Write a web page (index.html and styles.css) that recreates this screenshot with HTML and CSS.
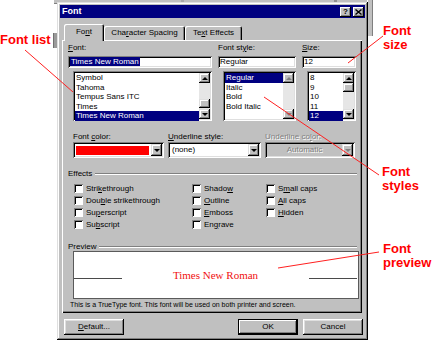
FILE: index.html
```html
<!DOCTYPE html>
<html>
<head>
<meta charset="utf-8">
<link rel="stylesheet" href="styles.css">
</head>
<body>
<div class="page">
  <div class="bg-win bg-top"></div>
  <div class="bg-win bg-right"></div>
  <div class="bg-win bg-left"></div>
  <div class="dialog">
    <div class="titlebar">
      <span class="title">Font</span>
      <div class="tb-btns">
        <span class="tb-btn help">?</span>
        <span class="tb-btn close"><svg width="7" height="6" viewBox="0 0 7 6"><path d="M0.5 0.5 L6.5 5.5 M6.5 0.5 L0.5 5.5" stroke="#000" stroke-width="1.4"/></svg></span>
      </div>
    </div>
    <div class="tabs">
      <div class="tab active t-font">Fo<u>n</u>t</div>
      <div class="tab t-char">Cha<u>r</u>acter Spacing</div>
      <div class="tab t-fx">Te<u>x</u>t Effects</div>
    </div>
    <div class="panel">
      <div class="row1">
        <div class="col">
          <div class="lbl"><u>F</u>ont:</div>
          <div class="field"><span class="sel">Times New Roman</span></div>
          <div class="list">
            <div class="items">
              <div class="item">Symbol</div>
              <div class="item">Tahoma</div>
              <div class="item">Tempus Sans ITC</div>
              <div class="item">Times</div>
              <div class="item selected">Times New Roman</div>
            </div>
            <div class="sbar">
              <div class="sbtn"><span class="arr up"></span></div>
              <div class="track"><div class="thumb thumb-font"></div></div>
              <div class="sbtn"><span class="arr down"></span></div>
            </div>
          </div>
        </div>
        <div class="col">
          <div class="lbl">Font st<u>y</u>le:</div>
          <div class="field">Regular</div>
          <div class="list">
            <div class="items">
              <div class="item selected">Regular</div>
              <div class="item">Italic</div>
              <div class="item">Bold</div>
              <div class="item">Bold Italic</div>
            </div>
            <div class="sbar">
              <div class="sbtn"><span class="arr up dis"></span></div>
              <div class="track"></div>
              <div class="sbtn"><span class="arr down dis"></span></div>
            </div>
          </div>
        </div>
        <div class="col">
          <div class="lbl"><u>S</u>ize:</div>
          <div class="field">12</div>
          <div class="list">
            <div class="items">
              <div class="item">8</div>
              <div class="item">9</div>
              <div class="item">10</div>
              <div class="item">11</div>
              <div class="item selected">12</div>
            </div>
            <div class="sbar">
              <div class="sbtn"><span class="arr up"></span></div>
              <div class="track"><div class="thumb thumb-size"></div></div>
              <div class="sbtn"><span class="arr down"></span></div>
            </div>
          </div>
        </div>
      </div>

      <div class="row2">
        <div class="col">
          <div class="lbl">Font <u>c</u>olor:</div>
          <div class="combo">
            <div class="swatch"></div>
            <div class="cbtn"><span class="arr down"></span></div>
          </div>
        </div>
        <div class="col">
          <div class="lbl"><u>U</u>nderline style:</div>
          <div class="combo">
            <div class="ctext">(none)</div>
            <div class="cbtn"><span class="arr down"></span></div>
          </div>
        </div>
        <div class="col">
          <div class="lbl disabled">Underline co<u>l</u>or:</div>
          <div class="combo off">
            <div class="ctext center disabled">Automatic</div>
            <div class="cbtn"><span class="arr down dis"></span></div>
          </div>
        </div>
      </div>

      <div class="group effects">
        <div class="ghead"><span>Effects</span><div class="groove"></div></div>
        <div class="checks">
          <div class="chk"><span class="box"></span><span>Stri<u>k</u>ethrough</span></div>
          <div class="chk"><span class="box"></span><span>Dou<u>b</u>le strikethrough</span></div>
          <div class="chk"><span class="box"></span><span>Su<u>p</u>erscript</span></div>
          <div class="chk"><span class="box"></span><span>Su<u>b</u>script</span></div>
          <div class="chk"><span class="box"></span><span>Shado<u>w</u></span></div>
          <div class="chk"><span class="box"></span><span><u>O</u>utline</span></div>
          <div class="chk"><span class="box"></span><span><u>E</u>mboss</span></div>
          <div class="chk"><span class="box"></span><span>En<u>g</u>rave</span></div>
          <div class="chk"><span class="box"></span><span>S<u>m</u>all caps</span></div>
          <div class="chk"><span class="box"></span><span><u>A</u>ll caps</span></div>
          <div class="chk"><span class="box"></span><span><u>H</u>idden</span></div>
        </div>
      </div>

      <div class="group preview">
        <div class="ghead"><span>Preview</span><div class="groove"></div></div>
        <div class="pbox">
          <div class="pline"></div>
          <div class="ptext">Times New Roman</div>
          <div class="pline"></div>
        </div>
      </div>
      <div class="note">This is a TrueType font. This font will be used on both printer and screen.</div>
    </div>
    <div class="buttons">
      <div class="btn default-btn"><u>D</u>efault...</div>
      <div class="spacer"></div>
      <div class="btn ok">OK</div>
      <div class="btn cancel">Cancel</div>
    </div>
  </div>

  <div class="callout c-list">Font list</div>
  <div class="callout c-size">Font<br>size</div>
  <div class="callout c-styles">Font<br>styles</div>
  <div class="callout c-preview">Font<br>preview</div>

  <svg class="leaders" width="432" height="343" viewBox="0 0 432 343">
    <line x1="25" y1="50" x2="73" y2="92"/>
    <line x1="348" y1="63" x2="383" y2="36"/>
    <line x1="264" y1="97" x2="379" y2="175"/>
    <line x1="278" y1="268" x2="379" y2="252"/>
  </svg>
</div>
</body>
</html>
```

FILE: styles.css
```css
* { box-sizing: border-box; margin: 0; padding: 0; }
html, body { background: #fff; }
body {
  width: 432px;
  height: 343px;
  overflow: hidden;
  font-family: "Liberation Sans", Arial, sans-serif;
  font-size: 8px;
  color: #000;
}
u { text-decoration: underline; text-underline-offset: 1px; }

.page {
  position: relative;
  width: 432px;
  height: 343px;
  padding: 2px 0 0 57px;
}

/* ---------- partly hidden windows behind the dialog ---------- */
.bg-win {
  position: absolute;
  background: #c0c0c0;
}
.bg-top {
  left: 54px;
  top: 0;
  width: 318px;
  height: 4px;
  border-bottom: 1px solid #808080;
  background: linear-gradient(90deg, #c0c0c0 0 40%, #a8a8a8 40% 41%, #c0c0c0 41% 88%, #909090 88% 89%, #c0c0c0 89%);
}
.bg-right {
  left: 367px;
  top: 0;
  width: 6px;
  height: 36px;
  border-right: 1px solid #808080;
  box-shadow: inset 1px 0 #fff;
}
.bg-left {
  left: 53px;
  top: 33px;
  width: 5px;
  height: 15px;
  background: #9a9a9a;
  border-left: 1px solid #707070;
}

/* ---------- dialog window ---------- */
.dialog {
  position: relative;
  z-index: 1;
  width: 311px;
  height: 338px;
  background: #c0c0c0;
  padding: 3px;
  display: flex;
  flex-direction: column;
  box-shadow: inset -1px -1px #000, inset 1px 1px #dfdfdf,
              inset -2px -2px #808080, inset 2px 2px #fff;
}

.titlebar {
  height: 13px;
  background: #000080;
  display: flex;
  align-items: center;
  justify-content: space-between;
  padding: 0 1px 0 2px;
}
.title {
  color: #fff;
  font-weight: bold;
  font-size: 9px;
  line-height: 13px;
}
.tb-btns { display: flex; gap: 2px; }
.tb-btn {
  width: 11px;
  height: 10px;
  background: #c0c0c0;
  display: flex;
  align-items: center;
  justify-content: center;
  font-weight: bold;
  font-size: 8px;
  line-height: 10px;
  box-shadow: inset -1px -1px #000, inset 1px 1px #fff, inset -2px -2px #808080;
}
.tb-btn svg { display: block; }

/* ---------- tabs ---------- */
.tabs {
  height: 16px;
  margin-top: 6px;
  padding-left: 4px;
  display: flex;
  align-items: flex-end;
  position: relative;
  z-index: 2;
}
.tab {
  height: 14px;
  line-height: 13px;
  text-align: center;
  background: #c0c0c0;
  border-radius: 2px 2px 0 0;
  box-shadow: inset 1px 1px #fff, inset -1px 0 #000, inset -2px 0 #808080;
}
.tab.active {
  height: 17px;
  margin-bottom: -1px;
  line-height: 15px;
}
.t-font { width: 40px; }
.t-char { width: 81px; }
.t-fx { width: 57px; }

/* ---------- panel ---------- */
.panel {
  height: 273px;
  margin: 0 3px 0 2px;
  padding: 3px 6px 3px 6px;
  background: #c0c0c0;
  box-shadow: inset 1px 1px #fff, inset -1px -1px #000, inset -2px -2px #808080;
}
.lbl { line-height: 10px; height: 10px; white-space: nowrap; }
.disabled { color: #808080; text-shadow: 1px 1px #fff; }

.row1 {
  display: grid;
  grid-template-columns: 144px 78px 54px;
  column-gap: 6px;
}
.col { display: flex; flex-direction: column; }

.field {
  margin-top: 3px;
  height: 12px;
  line-height: 12px;
  padding-left: 2px;
  background: #fff;
  white-space: nowrap;
  box-shadow: inset 1px 1px #808080, inset -1px -1px #fff, inset 2px 2px #000, inset -2px -2px #dfdfdf;
}
.sel { background: #000080; color: #fff; padding: 0 1px; }

.list {
  margin-top: 3px;
  margin-left: 5px;
  height: 50px;
  padding: 2px;
  background: #fff;
  display: flex;
  box-shadow: inset 1px 1px #808080, inset -1px -1px #fff, inset 2px 2px #000, inset -2px -2px #dfdfdf;
}
.items { flex: 1; min-width: 0; }
.item {
  height: 9.6px;
  line-height: 9.6px;
  padding-left: 1px;
  white-space: nowrap;
}
.item.selected { background: #000080; color: #fff; }

.sbar {
  width: 11px;
  display: flex;
  flex-direction: column;
}
.sbtn {
  height: 10px;
  background: #c0c0c0;
  display: flex;
  align-items: center;
  justify-content: center;
  box-shadow: inset -1px -1px #000, inset 1px 1px #dfdfdf, inset -2px -2px #808080, inset 2px 2px #fff;
}
.track {
  flex: 1;
  background: #e6e6e6;
  display: flex;
  flex-direction: column;
}
.thumb {
  height: 9px;
  background: #c0c0c0;
  box-shadow: inset -1px -1px #000, inset 1px 1px #dfdfdf, inset -2px -2px #808080, inset 2px 2px #fff;
}
.thumb-font { margin-top: auto; margin-bottom: 1px; }
.thumb-size { margin-top: 0; }

.arr { width: 0; height: 0; display: block; }
.arr.up { border-left: 3px solid transparent; border-right: 3px solid transparent; border-bottom: 3px solid #000; }
.arr.down { border-left: 3px solid transparent; border-right: 3px solid transparent; border-top: 3px solid #000; }
.arr.up.dis { border-bottom-color: #808080; }
.arr.down.dis { border-top-color: #808080; }

/* ---------- row 2 ---------- */
.row2 {
  margin-top: 11px;
  margin-left: 5px;
  display: grid;
  grid-template-columns: 91px 93px 90px;
  column-gap: 4px;
}
.combo {
  height: 16px;
  padding: 2px;
  background: #fff;
  display: flex;
  box-shadow: inset 1px 1px #808080, inset -1px -1px #fff, inset 2px 2px #000, inset -2px -2px #dfdfdf;
}
.combo.off { background: #c0c0c0; }
.swatch { flex: 1; margin: 2px 2px 1px 1px; background: #ff0000; }
.ctext { flex: 1; line-height: 12px; padding-left: 2px; white-space: nowrap; }
.ctext.center { text-align: center; padding-left: 0; }
.cbtn {
  width: 11px;
  background: #c0c0c0;
  display: flex;
  align-items: center;
  justify-content: center;
  box-shadow: inset -1px -1px #000, inset 1px 1px #dfdfdf, inset -2px -2px #808080, inset 2px 2px #fff;
}

/* ---------- groups ---------- */
.effects { margin-top: 11px; }
.ghead {
  display: flex;
  align-items: center;
  gap: 3px;
  height: 10px;
  line-height: 10px;
  margin-right: -1px;
}
.groove {
  flex: 1;
  height: 2px;
  border-top: 1px solid #808080;
  border-bottom: 1px solid #fff;
}
.checks {
  margin-top: 3px;
  padding-left: 6px;
  display: grid;
  grid-template-columns: 118px 74px 1fr;
  grid-template-rows: repeat(4, 12px);
  grid-auto-flow: column;
}
.chk {
  display: flex;
  align-items: center;
  gap: 3px;
  white-space: nowrap;
}
.box {
  width: 9px;
  height: 9px;
  background: #fff;
  flex: none;
  box-shadow: inset 1px 1px #808080, inset -1px -1px #fff, inset 2px 2px #000;
}

.preview { margin-top: 12px; }
.preview .ghead { height: 9px; line-height: 9px; }
.pbox {
  margin-left: 5px;
  width: 286px;
  height: 48px;
  background: #fff;
  border: 1px solid #5a5a5a;
  padding: 17px 1px 0 0;
  display: flex;
  align-items: baseline;
}
.pline { width: 48px; height: 1px; background: #4a4a4a; flex: none; }
.ptext {
  flex: 1;
  text-align: center;
  font-family: "Liberation Serif", "Times New Roman", serif;
  font-size: 11px;
  line-height: 12px;
  color: #f01010;
}
.note {
  margin-top: 1px;
  padding-left: 2px;
  font-size: 7px;
  line-height: 10px;
  white-space: nowrap;
}

/* ---------- buttons ---------- */
.buttons {
  margin-top: 6px;
  height: 16px;
  display: flex;
}
.spacer { flex: 1; }
.btn {
  width: 60px;
  height: 16px;
  line-height: 16px;
  text-align: center;
  background: #c0c0c0;
  box-shadow: inset -1px -1px #000, inset 1px 1px #fff, inset -2px -2px #808080, inset 2px 2px #dfdfdf;
}
.default-btn { margin-left: 4px; }
.ok { box-shadow: inset 0 0 0 1px #000, inset -2px -2px #000, inset 2px 2px #fff, inset -3px -3px #808080; }
.cancel { margin-left: 5px; margin-right: 2px; }

/* ---------- callouts ---------- */
.callout {
  position: absolute;
  z-index: 3;
  color: #ff0000;
  font-weight: bold;
  font-size: 13px;
  line-height: 14px;
  white-space: nowrap;
}
.c-list { left: 0; top: 33px; }
.c-size { left: 383px; top: 24px; }
.c-styles { left: 382px; top: 165px; }
.c-preview { left: 383px; top: 242px; }

.leaders {
  position: absolute;
  z-index: 4;
  left: 0;
  top: 0;
  pointer-events: none;
}
.leaders line { stroke: #ff2020; stroke-width: 1; }
```
